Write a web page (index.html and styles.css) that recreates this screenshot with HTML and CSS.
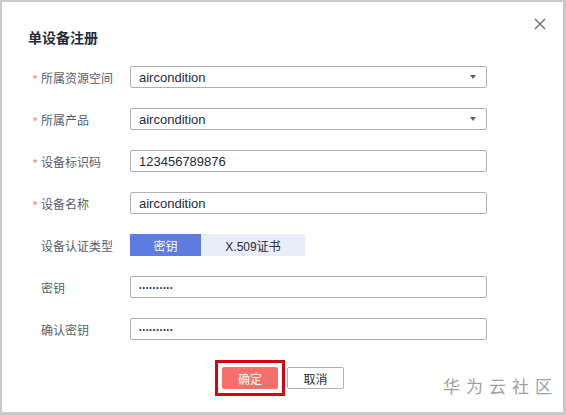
FILE: index.html
```html
<!DOCTYPE html>
<html lang="zh-CN">
<head>
  <meta charset="UTF-8" />
  <title>单设备注册</title>
  <link rel="stylesheet" href="styles.css">
</head>
<body>

  <div class="dialog">
    <button type="button" class="close-btn" aria-label="关闭">
      <svg width="12" height="12" viewBox="0 0 12 12"><path d="M1 1L11 11M11 1L1 11" stroke="#666" stroke-width="1.3" fill="none"/></svg>
    </button>

    <h2 class="dialog-title">单设备注册</h2>

    <form class="reg-form">
      <div class="form-row">
        <label class="form-label required">所属资源空间</label>
        <div class="select-box">
          <span>aircondition</span>
          <i class="caret"></i>
        </div>
      </div>

      <div class="form-row">
        <label class="form-label required">所属产品</label>
        <div class="select-box">
          <span>aircondition</span>
          <i class="caret"></i>
        </div>
      </div>

      <div class="form-row">
        <label class="form-label required">设备标识码</label>
        <input type="text" class="text-input" value="123456789876" />
      </div>

      <div class="form-row">
        <label class="form-label required">设备名称</label>
        <input type="text" class="text-input" value="aircondition" />
      </div>

      <div class="form-row">
        <label class="form-label">设备认证类型</label>
        <div class="toggle">
          <button type="button" class="toggle-item active">密钥</button>
          <button type="button" class="toggle-item">X.509证书</button>
        </div>
      </div>

      <div class="form-row">
        <label class="form-label">密钥</label>
        <input type="password" class="text-input pwd" value="1234567890" />
      </div>

      <div class="form-row">
        <label class="form-label">确认密钥</label>
        <input type="password" class="text-input pwd" value="1234567890" />
      </div>

      <div class="form-actions">
        <span class="mark-box">
          <button type="button" class="btn btn-primary">确定</button>
        </span>
        <button type="button" class="btn btn-default">取消</button>
      </div>
    </form>

    <div class="watermark">华为云社区</div>
  </div>

</body>
</html>
```

FILE: styles.css
```css
* {
  box-sizing: border-box;
}

body {
  margin: 0;
  background: #fff;
  font-family: "Liberation Sans", "Noto Sans CJK SC", sans-serif;
}

.dialog {
  position: relative;
  width: 566px;
  height: 415px;
  background: #fff;
  border: 2px solid #c9c9c9;
  border-right-width: 3px;
  border-bottom-width: 3px;
}

.close-btn {
  position: absolute;
  top: 15px;
  right: 16px;
  width: 14px;
  height: 14px;
  padding: 0;
  border: none;
  background: none;
  display: flex;
  align-items: center;
  justify-content: center;
  cursor: pointer;
}

.dialog-title {
  margin: 0;
  padding: 27px 0 0 26px;
  font-size: 14px;
  line-height: 18px;
  font-weight: bold;
  color: #252b3a;
}

.reg-form {
  margin-top: 19px;
  padding-left: 30px;
}

.form-row {
  display: flex;
  align-items: center;
  height: 22px;
  margin-bottom: 20px;
}

.form-label {
  width: 98px;
  padding-left: 9px;
  font-size: 12px;
  color: #575d6c;
  position: relative;
}

.form-label.required::before {
  content: "*";
  position: absolute;
  left: 1px;
  top: 4px;
  color: #f66f6a;
  font-size: 11px;
}

.select-box,
.text-input {
  width: 357px;
  height: 22px;
  border: 1px solid #adb0b8;
  border-radius: 2px;
  background: #fff;
  font-family: inherit;
  font-size: 13px;
  color: #252b3a;
  padding: 0 8px;
}

.select-box {
  display: flex;
  align-items: center;
  justify-content: space-between;
}

.caret {
  width: 0;
  height: 0;
  margin-right: 2px;
  border-left: 3px solid transparent;
  border-right: 3px solid transparent;
  border-top: 4px solid #5e5e5e;
}

.text-input {
  outline: none;
}

.text-input.pwd {
  font-size: 7px;
  letter-spacing: 1px;
}

.toggle {
  display: flex;
  height: 22px;
}

.toggle-item {
  border: none;
  margin: 0;
  font-family: inherit;
  font-size: 12px;
  background: #e9edfa;
  color: #252b3a;
  cursor: pointer;
}

.toggle-item:first-child {
  width: 71px;
}

.toggle-item:last-child {
  width: 104px;
}

.toggle-item.active {
  background: #5e7ce0;
  color: #fff;
}

.form-actions {
  display: flex;
  align-items: center;
  margin-top: 17px;
  padding-left: 183px;
}

.mark-box {
  display: inline-flex;
  padding: 4px;
  border: 3px solid #d7000f;
  margin-right: 2px;
}

.btn {
  width: 56px;
  height: 22px;
  padding: 0;
  font-family: inherit;
  font-size: 12px;
  border-radius: 2px;
  cursor: pointer;
}

.btn-primary {
  background: #f66f6a;
  border: 1px solid #f66f6a;
  color: #fff;
}

.btn-default {
  width: 57px;
  background: #fff;
  border: 1px solid #adb0b8;
  color: #252b3a;
}

.watermark {
  position: absolute;
  right: 11px;
  bottom: 14px;
  font-size: 17px;
  letter-spacing: 6px;
  margin-right: -6px;
  color: #a0a0a0;
}
```
